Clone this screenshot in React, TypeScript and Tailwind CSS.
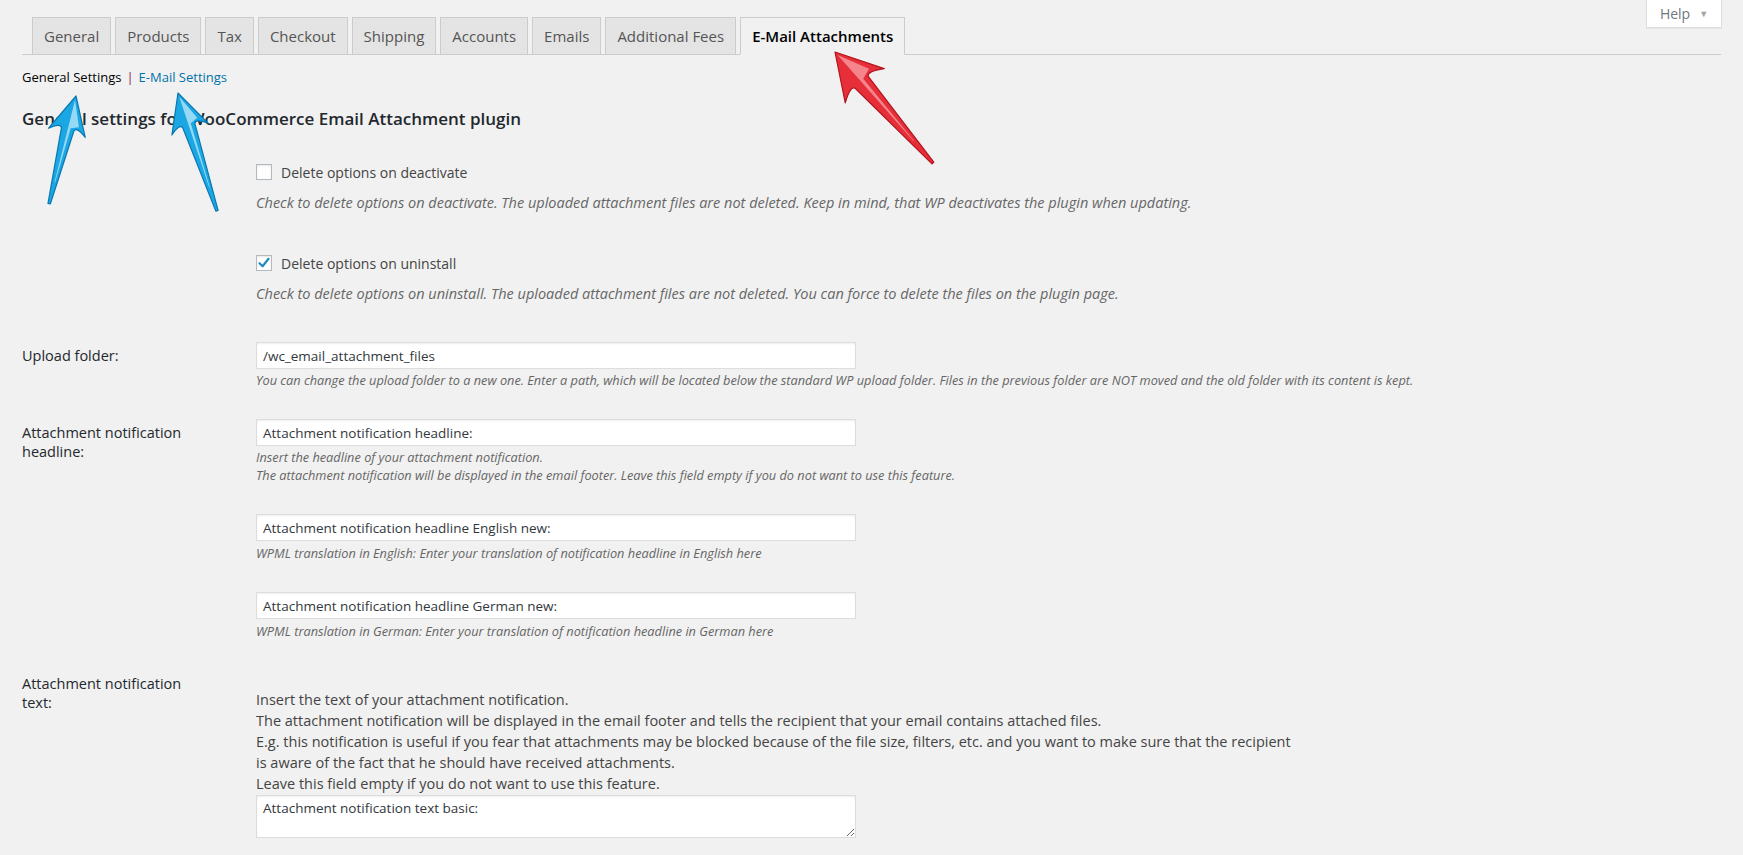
import clsx from "clsx";

const tabs = [
  "General",
  "Products",
  "Tax",
  "Checkout",
  "Shipping",
  "Accounts",
  "Emails",
  "Additional Fees",
  "E-Mail Attachments",
];

type ArrowProps = {
  x: number;
  y: number;
  length: number;
  angle: number;
  head: number;
  half: number;
  fill: string;
  stroke: string;
  shine: string;
};

// glossy pointer arrow, tip at (x, y), tail trailing off at `length`
const Arrow = ({ x, y, length, angle, head, half, fill, stroke, shine }: ArrowProps) => {
  const neck = half * 0.34;
  const body = `M0 0 L${half} ${head} Q${neck + 2} ${head * 0.78} ${neck} ${head * 0.9} L1.2 ${length} L-1.2 ${length} L${-neck} ${head * 0.9} Q${-neck - 2} ${head * 0.78} ${-half} ${head} Z`;
  const gloss = `M0 4 L${half * 0.55} ${head * 0.78} L${neck * 0.4} ${head * 0.86} L0.6 ${length * 0.8} L0 ${length * 0.8} Z`;
  return (
    <g transform={`translate(${x} ${y}) rotate(${angle})`}>
      <path d={body} fill={fill} stroke={stroke} strokeWidth={1.2} strokeLinejoin="round" />
      <path d={gloss} fill={shine} opacity={0.75} />
    </g>
  );
};

const Checkbox = ({ checked }: { checked?: boolean }) => (
  <span className="flex h-[16px] w-[16px] shrink-0 items-center justify-center border border-[#b4b9be] bg-white shadow-[inset_0_1px_2px_rgba(0,0,0,0.1)]">
    {checked && (
      <svg width="14" height="14" viewBox="0 0 14 14">
        <path d="M2.5 7.2 L5.6 10.3 L11.5 2.8" fill="none" stroke="#1e8cbe" strokeWidth="2.2" strokeLinecap="round" strokeLinejoin="round" />
      </svg>
    )}
  </span>
);

const TextInput = ({ value }: { value: string }) => (
  <input
    readOnly
    value={value}
    className="block h-[27px] w-[600px] border border-[#ddd] bg-white px-[6px] text-[13.5px] text-[#32373c] shadow-[inset_0_1px_2px_rgba(0,0,0,0.07)] outline-none"
  />
);

const App = () => {
  return (
    <div className="relative h-[855px] overflow-hidden bg-[#f1f1f1] font-['Open_Sans',sans-serif] text-[#444]">
      <div className="flex justify-end pr-[21px]">
        <div className="flex h-[28px] w-[76px] items-center justify-center gap-[9px] border border-t-0 border-[#ddd] bg-white text-[14px] text-[#72777c] shadow-[0_1px_1px_rgba(0,0,0,0.04)]">
          <span>Help</span>
          <span className="text-[9px] text-[#a0a5aa]">▼</span>
        </div>
      </div>

      <nav className="mx-[22px] -mt-[11px] flex gap-[4px] border-b border-[#ccc] pl-[10px]">
        {tabs.map((t, i) => {
          const active = i === tabs.length - 1;
          return (
            <div
              key={t}
              className={clsx(
                "-mb-px h-[38px] border border-[#ccc] px-[11px] text-[15px] leading-[36px]",
                active ? "border-b-[#f1f1f1] bg-[#f1f1f1] font-semibold text-black" : "bg-[#e4e4e4] font-normal text-[#555]"
              )}
            >
              {t}
            </div>
          );
        })}
      </nav>

      <div className="px-[22px]">
        <ul className="mt-[12px] flex items-center gap-[5px] text-[13px] leading-[20px]">
          <li className="text-black">General Settings</li>
          <li className="text-[#8a2252]">|</li>
          <li className="text-[#0073aa]">E-Mail Settings</li>
        </ul>

        <h2 className="mt-[20px] text-[17px] font-semibold leading-[24px] text-[#23282d]">
          General settings for WooCommerce Email Attachment plugin
        </h2>

        <div className="mt-[31px] flex">
          <div className="w-[234px] shrink-0" />
          <div>
            <label className="flex h-[20px] items-center gap-[9px] text-[14px] text-[#444]">
              <Checkbox />
              Delete options on deactivate
            </label>
            <p className="mt-[11px] text-[14.5px] italic leading-[20px] text-[#666]">
              Check to delete options on deactivate. The uploaded attachment files are not deleted. Keep in mind, that WP deactivates the plugin when updating.
            </p>
          </div>
        </div>

        <div className="mt-[40px] flex">
          <div className="w-[234px] shrink-0" />
          <div>
            <label className="flex h-[20px] items-center gap-[9px] text-[14px] text-[#444]">
              <Checkbox checked />
              Delete options on uninstall
            </label>
            <p className="mt-[11px] text-[14.5px] italic leading-[20px] text-[#666]">
              Check to delete options on uninstall. The uploaded attachment files are not deleted. You can force to delete the files on the plugin page.
            </p>
          </div>
        </div>

        <div className="mt-[38px] flex">
          <div className="w-[234px] shrink-0 text-[14.5px] leading-[27px] text-[#23282d]">Upload folder:</div>
          <div>
            <TextInput value="/wc_email_attachment_files" />
            <p className="mt-[2px] text-[12.75px] italic leading-[18px] text-[#666]">
              You can change the upload folder to a new one. Enter a path, which will be located below the standard WP upload folder. Files in the previous folder are NOT moved and the old folder with its content is kept.
            </p>
          </div>
        </div>

        <div className="mt-[30px] flex">
          <div className="w-[234px] shrink-0 pt-[4px]">
            <div className="w-[190px] text-[14.5px] leading-[19px] text-[#23282d]">Attachment notification headline:</div>
          </div>
          <div>
            <TextInput value="Attachment notification headline:" />
            <p className="mt-[2px] text-[12.75px] italic leading-[18px] text-[#666]">
              Insert the headline of your attachment notification.
              <br />
              The attachment notification will be displayed in the email footer. Leave this field empty if you do not want to use this feature.
            </p>

            <div className="mt-[30px]">
              <TextInput value="Attachment notification headline English new:" />
              <p className="mt-[3px] text-[12.75px] italic leading-[18px] text-[#666]">
                WPML translation in English: Enter your translation of notification headline in English here
              </p>
            </div>

            <div className="mt-[30px]">
              <TextInput value="Attachment notification headline German new:" />
              <p className="mt-[3px] text-[12.75px] italic leading-[18px] text-[#666]">
                WPML translation in German: Enter your translation of notification headline in German here
              </p>
            </div>
          </div>
        </div>

        <div className="mt-[34px] flex">
          <div className="w-[234px] shrink-0">
            <div className="w-[190px] text-[14.5px] leading-[19px] text-[#23282d]">Attachment notification text:</div>
          </div>
          <div className="pt-[15px]">
            <p className="text-[14.5px] leading-[21px] text-[#444]">
              Insert the text of your attachment notification.
              <br />
              The attachment notification will be displayed in the email footer and tells the recipient that your email contains attached files.
              <br />
              E.g. this notification is useful if you fear that attachments may be blocked because of the file size, filters, etc. and you want to make sure that the recipient
              <br />
              is aware of the fact that he should have received attachments.
              <br />
              Leave this field empty if you do not want to use this feature.
            </p>
            <textarea
              readOnly
              defaultValue="Attachment notification text basic:"
              className="mt-[1px] block h-[43px] w-[600px] border border-[#ddd] bg-white px-[6px] py-[2px] text-[13.5px] leading-[20px] text-[#32373c] shadow-[inset_0_1px_2px_rgba(0,0,0,0.07)] outline-none"
            />
          </div>
        </div>
      </div>

      <svg className="pointer-events-none absolute left-0 top-0" width="1743" height="855">
        <Arrow x={76} y={96} length={111} angle={14} head={38} half={19} fill="#1ba6e4" stroke="#0a78b0" shine="#bfeafb" />
        <Arrow x={178} y={93} length={124} angle={-18.3} head={38} half={19} fill="#1ba6e4" stroke="#0a78b0" shine="#bfeafb" />
        <Arrow x={835} y={52} length={148} angle={-41.4} head={45} half={26} fill="#e62f38" stroke="#b1141d" shine="#f8a3a8" />
      </svg>
    </div>
  );
};

export default App;
